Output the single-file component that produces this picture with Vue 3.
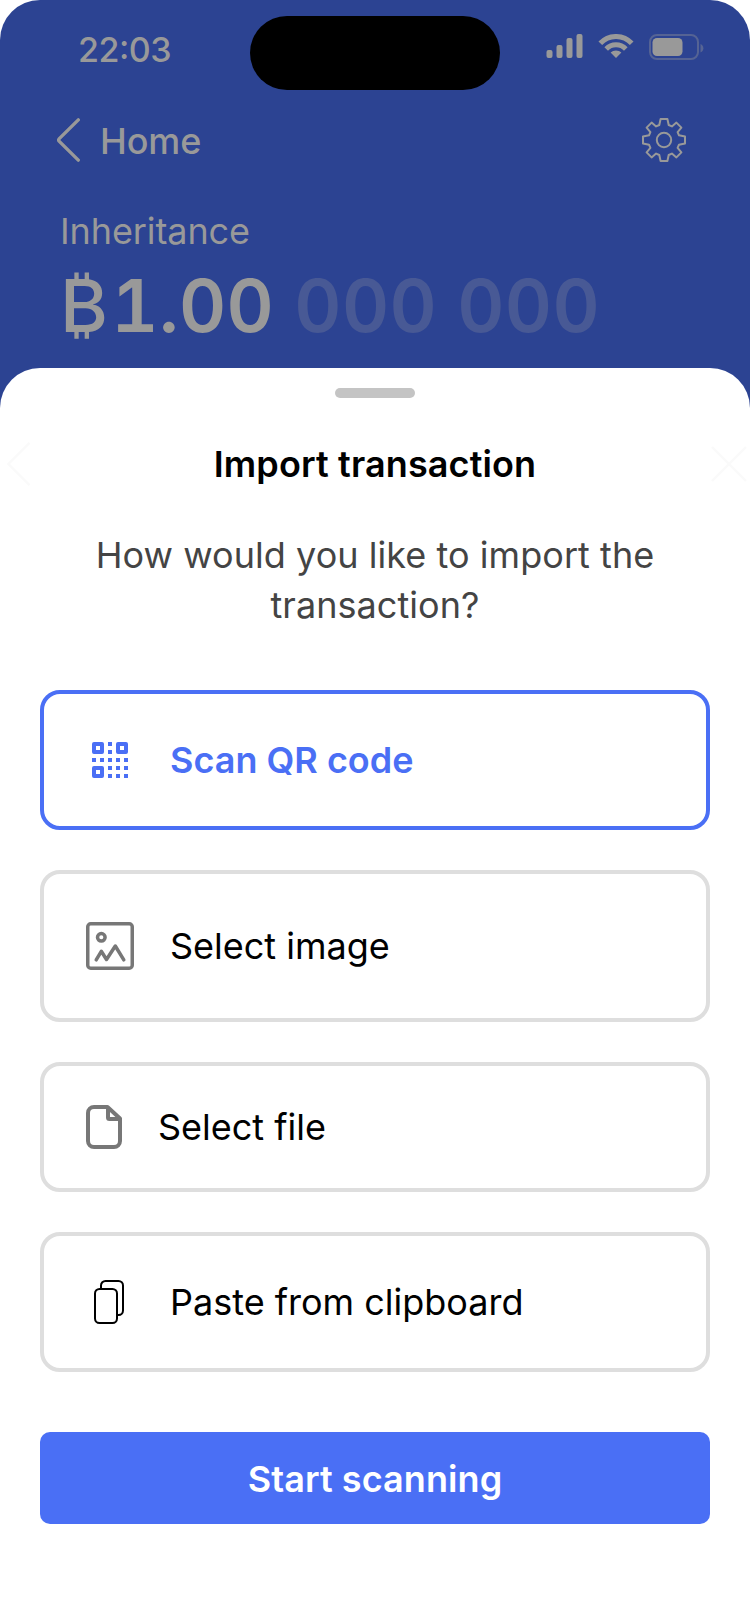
<script setup>
import { ref } from 'vue'

const options = [
  { id: 'qr', label: 'Scan QR code', height: 'h140' },
  { id: 'image', label: 'Select image', height: 'h152' },
  { id: 'file', label: 'Select file', height: 'h130' },
  { id: 'paste', label: 'Paste from clipboard', height: 'h140' }
]
const selected = ref('qr')

const qrDots = [
  [16, 0], [16, 8],
  [0, 16], [8, 16], [16, 16], [24, 16], [32, 16],
  [16, 24], [24, 24], [32, 24],
  [16, 32], [24, 32], [32, 32]
]
</script>

<template>
  <div class="phone">
    <header class="backdrop">
      <div class="status">
        <span class="time">22:03</span>
        <div class="island"></div>
        <div class="indicators">
          <svg class="signal" width="38" height="24" viewBox="0 0 38 24" fill="#999">
            <rect x="0.5" y="16" width="6" height="8" rx="2" />
            <rect x="10.5" y="11" width="6" height="13" rx="2" />
            <rect x="20.5" y="4" width="6" height="20" rx="2" />
            <rect x="30.5" y="0" width="6" height="24" rx="2" />
          </svg>
          <svg class="wifi" width="36" height="24" viewBox="0 0 36 24">
            <g fill="none" stroke="#999" stroke-width="5">
              <path d="M2.3 9.3A21.5 21.5 0 0 1 33.7 9.3" />
              <path d="M8.2 14.9A13.6 13.6 0 0 1 27.8 14.9" />
            </g>
            <path d="M18 24L12.6 18.6A7.8 7.8 0 0 1 23.4 18.6Z" fill="#999" />
          </svg>
          <svg class="battery" width="55" height="26" viewBox="0 0 55 26">
            <rect x="1" y="1" width="48" height="24" rx="7" fill="none" stroke="#999" stroke-opacity=".38" stroke-width="2" />
            <rect x="3.5" y="4" width="30" height="18" rx="4.5" fill="#999" />
            <path d="M51.5 10v8.5a4.6 4.6 0 0 0 0-8.5z" fill="#999" fill-opacity=".4" />
          </svg>
        </div>
      </div>
      <nav class="nav">
        <svg width="24" height="44" viewBox="0 0 24 44" fill="none" stroke="#999" stroke-width="3.4" stroke-linecap="round" stroke-linejoin="round">
          <path d="M21.3 1.9L2.3 20.6Q.9 22 2.3 23.4L21.3 42.1" />
        </svg>
        <span class="home">Home</span>
        <svg class="gear" width="44" height="44" viewBox="-22 -22 44 44" fill="none" stroke="#999" stroke-width="2" stroke-linejoin="round">
          <circle r="7.2" />
          <path d="M-3.4 -21H3.4L4.7 -15L7.9 -13.6L12.4 -17.4L17.4 -12.4L13.6 -7.9L15 -4.7L21 -3.4V3.4L15 4.7L13.6 7.9L17.4 12.4L12.4 17.4L7.9 13.6L4.7 15L3.4 21H-3.4L-4.7 15L-7.9 13.6L-12.4 17.4L-17.4 12.4L-13.6 7.9L-15 4.7L-21 3.4V-3.4L-15 -4.7L-13.6 -7.9L-17.4 -12.4L-12.4 -17.4L-7.9 -13.6L-4.7 -15Z" />
        </svg>
      </nav>
      <div class="wallet">Inheritance</div>
      <div class="amount"><span class="symbol">₿</span><span>1.00</span><span class="dim">&nbsp;000&nbsp;000</span></div>
    </header>

    <main class="sheet">
      <div class="handle"></div>
      <div class="head">
        <svg width="24" height="44" viewBox="0 0 24 44" fill="none" stroke="#fafafa" stroke-width="2.4">
          <path d="M22.5 .8L1.5 22L22.5 43.2" />
        </svg>
        <h1>Import transaction</h1>
        <svg width="36" height="36" viewBox="0 0 36 36" fill="none" stroke="#fafafa" stroke-width="2.4">
          <path d="M1 1L35 35M35 1L1 35" />
        </svg>
      </div>
      <p class="question">How would you like to import the transaction?</p>

      <div class="options">
        <button
          v-for="o in options"
          :key="o.id"
          class="option"
          :class="[o.height, { active: selected === o.id }]"
          @click="selected = o.id"
        >
          <svg v-if="o.id === 'qr'" width="48" height="36" viewBox="-6 0 48 36" fill="#4a6ff5">
            <g fill="none" stroke="#4a6ff5" stroke-width="4" stroke-linejoin="round">
              <rect x="2" y="2" width="8" height="8" />
              <rect x="26" y="2" width="8" height="8" />
              <rect x="2" y="26" width="8" height="8" />
            </g>
            <rect v-for="(d, i) in qrDots" :key="i" :x="d[0]" :y="d[1]" width="4" height="4" />
          </svg>
          <svg v-else-if="o.id === 'image'" width="48" height="48" viewBox="0 0 48 48" fill="none" stroke="#777" stroke-width="3.5">
            <rect x="1.75" y="1.75" width="44.5" height="44.5" rx="3" />
            <circle cx="15.3" cy="15.3" r="3.8" />
            <path d="M10.2 37.8L15.3 29.3L20.5 37.5L29.3 24L37.8 37.8" stroke-linecap="round" stroke-linejoin="round" />
          </svg>
          <svg v-else-if="o.id === 'file'" width="36" height="44" viewBox="0 0 36 44" fill="none" stroke="#777" stroke-width="4" stroke-linejoin="round">
            <path d="M8 2H21.5L34 13.5V36a6 6 0 0 1-6 6H8a6 6 0 0 1-6-6V8a6 6 0 0 1 6-6Z" />
            <path d="M22 3V12.5Q22 14 23.5 14H33" />
          </svg>
          <svg v-else width="48" height="44" viewBox="-8 0 48 44" fill="none" stroke="#000" stroke-width="2">
            <path d="M7 8V5.5A4.5 4.5 0 0 1 11.5 1H24.5A4.5 4.5 0 0 1 29 5.5V30.5A4.5 4.5 0 0 1 24.5 35H24" />
            <rect x="1" y="9" width="22" height="34" rx="4.5" />
          </svg>
          <span>{{ o.label }}</span>
        </button>
      </div>

      <button class="start">Start scanning</button>
    </main>
  </div>
</template>

<style>
body {
  background: #fff;
}
</style>

<style scoped>
.phone {
  box-sizing: border-box;
  width: 750px;
  height: 1624px;
  overflow: hidden;
  border-radius: 40px 40px 0 0;
  background: #2c4392;
  font-family: Inter, "Liberation Sans", sans-serif;
  font-size: 36px;
  color: #000;
}
svg {
  display: block;
  flex: none;
}
button {
  font: inherit;
  color: inherit;
}
.backdrop {
  height: 368px;
  color: #999;
}
.status {
  display: flex;
  height: 90px;
}
.time {
  box-sizing: border-box;
  width: 250px;
  padding: 28px 0 0 78px;
  font-size: 34px;
  line-height: 44px;
  font-weight: 550;
  font-feature-settings: "case";
  letter-spacing: -0.5px;
}
.island {
  width: 250px;
  height: 74px;
  margin-top: 16px;
  border-radius: 37px;
  background: #000;
}
.indicators {
  display: flex;
  padding: 34px 0 0 46px;
}
.wifi {
  margin-left: 14px;
}
.battery {
  margin-left: 15px;
}
.nav {
  display: flex;
  align-items: center;
  height: 44px;
  margin-top: 28px;
  padding: 0 64px 0 57px;
}
.home {
  margin: 2px 0 0 19px;
  font-weight: 500;
  line-height: 44px;
  letter-spacing: -0.1px;
}
.gear {
  margin-left: auto;
}
.wallet {
  margin: 47px 0 0 60px;
  line-height: 44px;
  letter-spacing: -0.1px;
}
.amount {
  display: flex;
  margin: 9px 0 0 60px;
  font-size: 73px;
  line-height: 88px;
  font-weight: 580;
  font-variant-numeric: tabular-nums;
  letter-spacing: 0.4px;
}
.symbol {
  margin-right: 3px;
  font-weight: 500;
}
.dim {
  color: #485995;
}
.sheet {
  display: flex;
  flex-direction: column;
  align-items: center;
  height: 1256px;
  border-radius: 40px 40px 0 0;
  background: #fff;
}
.handle {
  width: 80px;
  height: 10px;
  margin-top: 20px;
  border-radius: 5px;
  background: #c4c4c4;
}
.head {
  box-sizing: border-box;
  display: grid;
  grid-template-columns: 36px 1fr 36px;
  align-items: center;
  width: 750px;
  height: 44px;
  margin-top: 44px;
  padding: 0 3px 0 7px;
}
h1 {
  margin: 0 4px 0 0;
  font-size: 36px;
  line-height: 44px;
  font-weight: 600;
  letter-spacing: 0.12px;
  text-align: center;
}
.question {
  width: 600px;
  margin: 44px 0 0;
  line-height: 50px;
  letter-spacing: 0.05px;
  text-align: center;
  color: #444;
}
.options {
  display: flex;
  flex-direction: column;
  gap: 40px;
  width: 670px;
  margin-top: 60px;
}
.option {
  box-sizing: border-box;
  display: flex;
  align-items: center;
  gap: 36px;
  padding: 0 42px;
  border: 4px solid #dedede;
  border-radius: 20px;
  background: #fff;
}
.h130 {
  height: 130px;
}
.h140 {
  height: 140px;
}
.h152 {
  height: 152px;
}
.active {
  border-color: #4a6ff5;
  color: #4a6ff5;
  font-weight: 600;
}
.start {
  width: 670px;
  height: 92px;
  margin-top: 60px;
  padding: 2px 0 0;
  border: 0;
  border-radius: 10px;
  background: #4a6ff5;
  color: #fff;
  font-weight: 600;
  letter-spacing: 0.08px;
}
</style>
